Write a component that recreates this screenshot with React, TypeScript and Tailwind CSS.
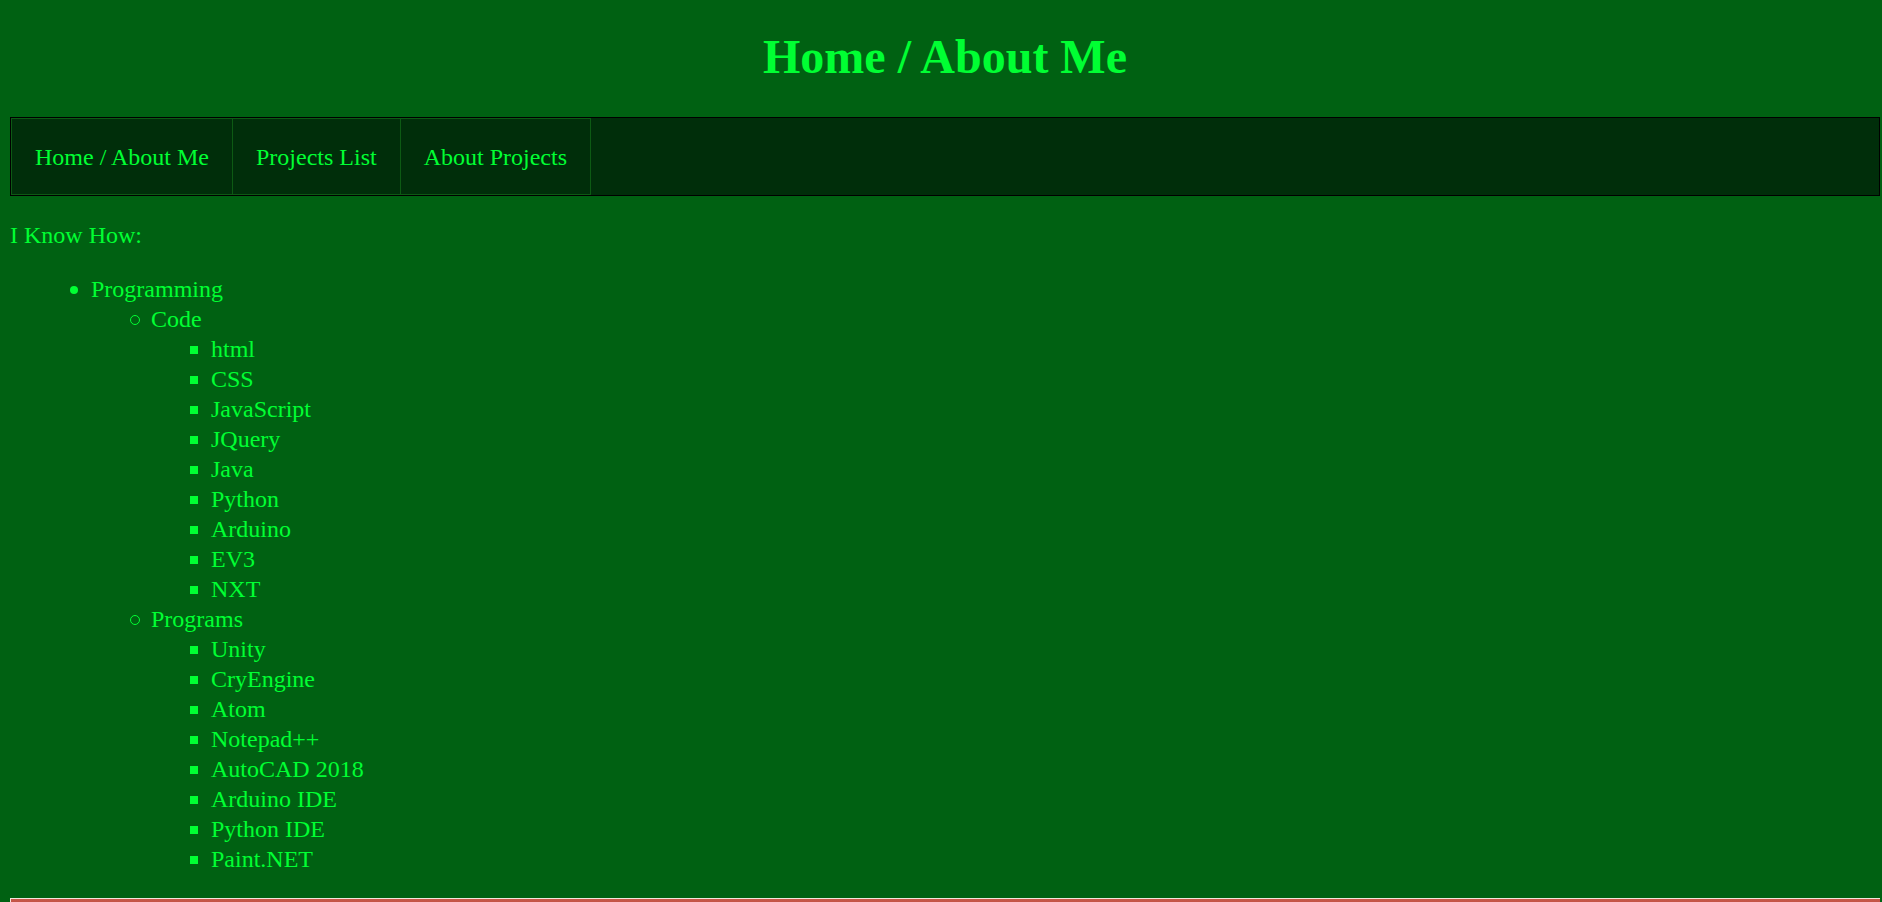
import React from "react";

const code = ["html", "CSS", "JavaScript", "JQuery", "Java", "Python", "Arduino", "EV3", "NXT"];
const programs = ["Unity", "CryEngine", "Atom", "Notepad++", "AutoCAD 2018", "Arduino IDE", "Python IDE", "Paint.NET"];
const navItems = ["Home / About Me", "Projects List", "About Projects"];

type Kind = "disc" | "circle" | "square";

function Marker({ kind }: { kind: Kind }) {
  if (kind === "disc") return <span className="mt-[2px] block h-[8px] w-[8px] rounded-full bg-[#00ff33]" />;
  if (kind === "circle")
    return <span className="mt-[2px] block h-[10px] w-[10px] rounded-full border border-[#00ff33]" />;
  return <span className="mt-[1px] block h-[8px] w-[8px] bg-[#00ff33]" />;
}

function Row({ kind, children }: { kind: Kind; children: React.ReactNode }) {
  return (
    <div className="flex items-center">
      <span className="-ml-[21px] flex w-[21px] shrink-0 items-center">
        <Marker kind={kind} />
      </span>
      <span>{children}</span>
    </div>
  );
}

export default function App() {
  return (
    <div
      className="min-h-[902px] w-full overflow-hidden bg-[#006112] text-[#00ff33]"
      style={{ fontFamily: '"Liberation Serif", "Times New Roman", serif' }}
    >
      <div className="ml-[10px] w-[1870px]">
        <h1 className="mt-[29px] text-center text-[48px] font-bold leading-[56px]">Home / About Me</h1>
        <nav className="mt-[32px] flex h-[79px] border border-black bg-[#002e0a]">
          {navItems.map((t, i) => (
            <a
              key={t}
              href="#"
              className={`flex items-center border-y border-r border-[#0d5a14] px-[23px] text-[24px] leading-[28px] ${
                i === 0 ? "border-l" : ""
              }`}
            >
              {t}
            </a>
          ))}
        </nav>
        <p className="mt-[24px] text-[24px] leading-[30px]">I Know How:</p>
        <ul className="mt-[24px] pl-[81px] text-[24px] leading-[30px]">
          <li>
            <Row kind="disc">Programming</Row>
            <ul className="pl-[60px]">
              <li>
                <Row kind="circle">Code</Row>
                <ul className="pl-[60px]">
                  {code.map((c) => (
                    <li key={c}>
                      <Row kind="square">{c}</Row>
                    </li>
                  ))}
                </ul>
              </li>
              <li>
                <Row kind="circle">Programs</Row>
                <ul className="pl-[60px]">
                  {programs.map((c) => (
                    <li key={c}>
                      <Row kind="square">{c}</Row>
                    </li>
                  ))}
                </ul>
              </li>
            </ul>
          </li>
        </ul>
        <footer className="mt-[24px] h-[40px] border-l border-t border-[#f2e6dc] bg-gradient-to-b from-[#c8584a] to-[#8a0a0a]" />
      </div>
    </div>
  );
}
